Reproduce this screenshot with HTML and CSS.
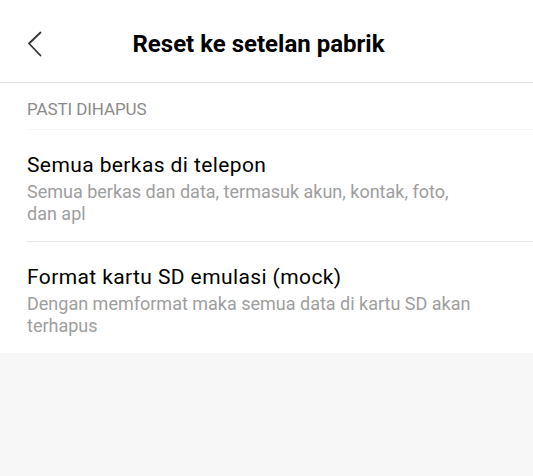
FILE: index.html
```html
<!DOCTYPE html>
<html lang="id">
<head>
<meta charset="utf-8">
<title>Reset ke setelan pabrik</title>
<link rel="stylesheet" href="styles.css">
</head>
<body>
<div class="screen">
  <header class="topbar">
    <button class="back" aria-label="Kembali">
      <svg width="16" height="26" viewBox="0 0 16 26"><path d="M13.5 1.5 L2 12.5 L13.5 24.5" fill="none" stroke="#333" stroke-width="1.8" stroke-linecap="round" stroke-linejoin="round"/></svg>
    </button>
    <h1 class="title">Reset ke setelan pabrik</h1>
  </header>
  <section class="card">
    <div class="section-label">PASTI DIHAPUS</div>
    <div class="item first">
      <div class="item-title">Semua berkas di telepon</div>
      <div class="item-sub">Semua berkas dan data, termasuk akun, kontak, foto,<br>dan apl</div>
    </div>
    <div class="item">
      <div class="item-title">Format kartu SD emulasi (mock)</div>
      <div class="item-sub">Dengan memformat maka semua data di kartu SD akan<br>terhapus</div>
    </div>
  </section>
</div>
</body>
</html>
```
FILE: styles.css
```css
html, body {
  margin: 0;
  padding: 0;
  background: #f7f7f7;
  font-family: Roboto, "Noto Sans", sans-serif;
}
.screen {
  width: 533px;
  min-height: 476px;
  background: #f7f7f7;
}
.topbar {
  height: 82px;
  background: #fff;
  border-bottom: 1px solid #e2e2e2;
  display: flex;
  align-items: center;
  justify-content: center;
  position: relative;
  box-sizing: content-box;
}
.back {
  position: absolute;
  left: 26px;
  top: 30px;
  width: 18px;
  height: 28px;
  padding: 0;
  border: 0;
  background: none;
  display: flex;
  align-items: center;
  justify-content: center;
}
.title {
  margin: 0 16px 0 0;
  font-size: 24px;
  font-weight: 700;
  color: #000;
  line-height: 28px;
  padding-top: 6px;
}
.card {
  background: #fff;
  padding-left: 27px;
}
.section-label {
  height: 47px;
  box-sizing: border-box;
  padding-top: 15px;
  font-size: 17px;
  line-height: 22px;
  color: #8a8a8a;
  letter-spacing: -0.1px;
  border-bottom: 1px solid #f6f6f6;
}
.item {
  padding: 21px 0 16px;
  border-top: 1px solid #e6e6e6;
}
.item.first {
  border-top: 0;
}
.item-title {
  font-size: 21px;
  line-height: 28px;
  letter-spacing: 0.4px;
  color: #000;
}
.item-sub {
  margin-top: 2px;
  font-size: 18px;
  line-height: 22px;
  color: #9e9e9e;
}
```
